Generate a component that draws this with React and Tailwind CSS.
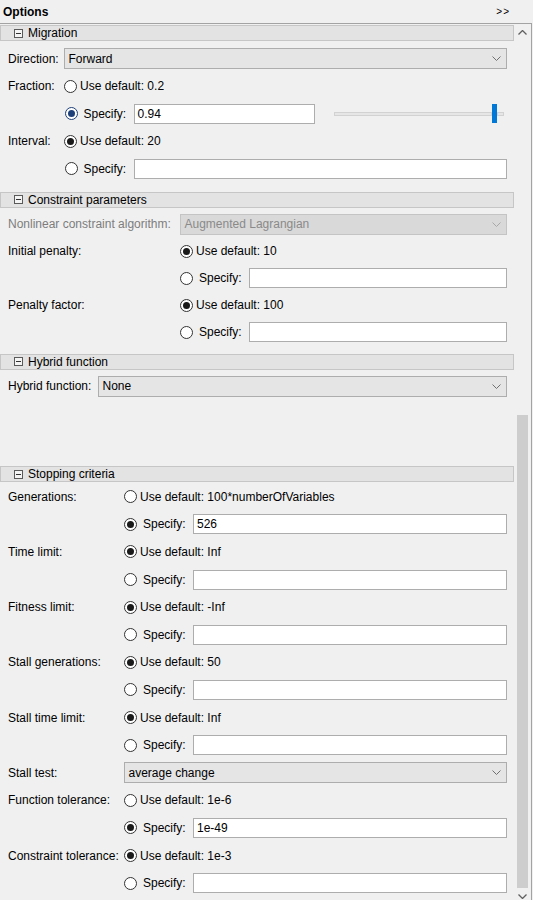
const Radio = ({ checked, focus }) => (
  <span
    className={`flex h-[13px] w-[13px] shrink-0 items-center justify-center rounded-full border bg-white ${
      focus ? "border-[#1d3f7a]" : "border-[#333333]"
    }`}
  >
    {checked && (
      <span className={`h-[7px] w-[7px] rounded-full ${focus ? "bg-[#1d3f7a]" : "bg-[#1a1a1a]"}`}></span>
    )}
  </span>
);

const SectionHeader = ({ title, className }) => (
  <div className={`flex h-[16px] items-center border border-[#c6c6c6] bg-[#e3e3e3] pl-[13px] ${className}`}>
    <span className="flex h-[9px] w-[9px] items-center justify-center border border-[#5a5a5a] bg-[#f4f4f4]">
      <span className="h-[1px] w-[5px] bg-[#333333]"></span>
    </span>
    <span className="ml-[5px] text-[12px] leading-none text-black">{title}</span>
  </div>
);

const Chevron = ({ color = "#707070" }) => (
  <svg width="9" height="5" viewBox="0 0 9 5" className="shrink-0">
    <polyline points="0.5,0.5 4.5,4.5 8.5,0.5" fill="none" stroke={color} strokeWidth="1" />
  </svg>
);

const Select = ({ value, disabled }) => (
  <div
    className={`flex h-[21px] flex-1 items-center justify-between border pl-[4px] pr-[5px] ${
      disabled ? "border-[#c4c4c4] bg-[#d9d9d9] text-[#8a8a8a]" : "border-[#adadad] bg-[#e5e5e5] text-black"
    }`}
  >
    <span>{value}</span>
    <Chevron color={disabled ? "#a8a8a8" : "#707070"} />
  </div>
);

const Input = ({ value, className = "flex-1" }) => (
  <div className={`flex h-[20px] items-center border border-[#adadad] bg-white px-[3px] ${className}`}>
    {value}
  </div>
);

const DefaultRow = ({ label, labelW, h, text, checked }) => (
  <div className={`flex items-center ${h}`}>
    <span className={`shrink-0 ${labelW}`}>{label}</span>
    <Radio checked={checked} />
    <span className="ml-[3px]">{text}</span>
  </div>
);

const SpecifyRow = ({ labelW, h, checked, focus, value, children }) => (
  <div className={`flex items-center ${h}`}>
    <span className={`shrink-0 ${labelW}`}></span>
    <div className="flex w-[69px] shrink-0 items-center">
      <Radio checked={checked} focus={focus} />
      <span className="ml-[6px]">Specify:</span>
    </div>
    {children || <Input value={value} />}
  </div>
);

const SelectRow = ({ label, labelW, h, value, disabled }) => (
  <div className={`flex items-center ${h}`}>
    <span className={`shrink-0 ${labelW} ${disabled ? "text-[#7d7d7d]" : ""}`}>{label}</span>
    <Select value={value} disabled={disabled} />
  </div>
);

const Slider = () => (
  <div className="ml-[19px] flex h-[20px] w-[170px] items-center">
    <div className="h-[4px] w-[158px] border border-[#d2d2d2] bg-[#e6e6e6]"></div>
    <div className="h-[19px] w-[5px] bg-[#0078d7]"></div>
    <div className="h-[4px] flex-1 border border-[#d2d2d2] bg-[#e6e6e6]"></div>
  </div>
);

const stopping = [
  { label: "Generations:", text: "100*numberOfVariables", def: false, value: "526" },
  { label: "Time limit:", text: "Inf", def: true, value: "" },
  { label: "Fitness limit:", text: "-Inf", def: true, value: "" },
  { label: "Stall generations:", text: "50", def: true, value: "" },
  { label: "Stall time limit:", text: "Inf", def: true, value: "" },
];

const stoppingTail = [
  { label: "Function tolerance:", text: "1e-6", def: false, value: "1e-49" },
  { label: "Constraint tolerance:", text: "1e-3", def: true, value: "" },
];

export default function App() {
  const sh = "h-[27.6px]";
  const sw = "w-[116px]";
  return (
    <div className="h-[900px] w-[533px] overflow-hidden bg-[#f0f0f0] font-['Liberation_Sans',Arial,sans-serif] text-[12px] text-black">
      <div className="flex h-[23px] items-center justify-between pl-[3px] pr-[23px]">
        <span className="text-[12px] font-bold">Options</span>
        <span className="text-[10px] tracking-[1px]">&gt;&gt;</span>
      </div>
      <div className="flex h-[882px] w-[532px] border-t border-r border-[#a3a3a3]">
        <div className="w-[514px] shrink-0 overflow-hidden">
          <SectionHeader title="Migration" className="mt-[1px]" />
          <div className="pl-[8px] pr-[7px] pt-[4px]">
            <SelectRow label="Direction:" labelW="w-[55.5px]" h="h-[27.5px]" value="Forward" />
            <DefaultRow label="Fraction:" labelW="w-[56px]" h="h-[27.5px]" text="Use default: 0.2" />
            <SpecifyRow labelW="w-[56.5px]" h="h-[27.5px]" checked focus>
              <Input value="0.94" className="w-[181px]" />
              <Slider />
            </SpecifyRow>
            <DefaultRow label="Interval:" labelW="w-[56px]" h="h-[27.5px]" text="Use default: 20" checked />
            <SpecifyRow labelW="w-[56.5px]" h="h-[27.5px]" value="" />
          </div>

          <SectionHeader title="Constraint parameters" className="mt-[9px]" />
          <div className="pl-[8px] pr-[7px] pt-[3px]">
            <SelectRow
              label="Nonlinear constraint algorithm:"
              labelW="w-[171.5px]"
              h="h-[27px]"
              value="Augmented Lagrangian"
              disabled
            />
            <DefaultRow label="Initial penalty:" labelW="w-[172px]" h="h-[27px]" text="Use default: 10" checked />
            <SpecifyRow labelW="w-[172px]" h="h-[27px]" value="" />
            <DefaultRow label="Penalty factor:" labelW="w-[172px]" h="h-[27px]" text="Use default: 100" checked />
            <SpecifyRow labelW="w-[172px]" h="h-[27px]" value="" />
          </div>

          <SectionHeader title="Hybrid function" className="mt-[8px]" />
          <div className="pl-[8px] pr-[7px] pt-[3px]">
            <SelectRow label="Hybrid function:" labelW="w-[89.5px]" h="h-[27px]" value="None" />
          </div>

          <SectionHeader title="Stopping criteria" className="mt-[66.5px]" />
          <div className="pl-[8px] pr-[7px] pt-[1px]">
            {stopping.map((r) => (
              <div key={r.label}>
                <DefaultRow label={r.label} labelW={sw} h={sh} text={`Use default: ${r.text}`} checked={r.def} />
                <SpecifyRow labelW={sw} h={sh} checked={!r.def} value={r.value} />
              </div>
            ))}
            <SelectRow label="Stall test:" labelW="w-[115.5px]" h={sh} value="average change" />
            {stoppingTail.map((r) => (
              <div key={r.label}>
                <DefaultRow label={r.label} labelW={sw} h={sh} text={`Use default: ${r.text}`} checked={r.def} />
                <SpecifyRow labelW={sw} h={sh} checked={!r.def} value={r.value} />
              </div>
            ))}
          </div>
        </div>

        <div className="flex w-[17px] shrink-0 flex-col">
          <div className="flex h-[17px] items-center justify-center">
            <svg width="9" height="5" viewBox="0 0 9 5">
              <polyline points="0.5,4.5 4.5,0.5 8.5,4.5" fill="none" stroke="#606060" strokeWidth="1.3" />
            </svg>
          </div>
          <div className="flex flex-1 flex-col px-[3px]">
            <div className="h-[374px]"></div>
            <div className="flex-1 bg-[#cdcdcd]"></div>
          </div>
          <div className="flex h-[17px] items-center justify-center">
            <svg width="9" height="5" viewBox="0 0 9 5">
              <polyline points="0.5,0.5 4.5,4.5 8.5,0.5" fill="none" stroke="#606060" strokeWidth="1.3" />
            </svg>
          </div>
        </div>
      </div>
    </div>
  );
}
